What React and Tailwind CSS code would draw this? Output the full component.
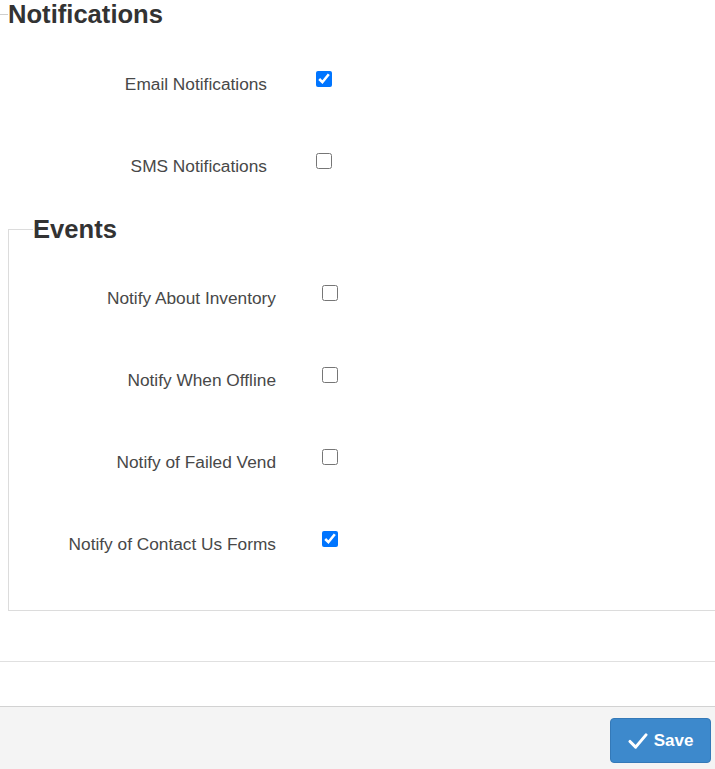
import React, { useState } from "react";

const outerItems = [
  { id: "email", label: "Email Notifications", checked: true },
  { id: "sms", label: "SMS Notifications", checked: false },
];

const eventItems = [
  { id: "inventory", label: "Notify About Inventory", checked: false },
  { id: "offline", label: "Notify When Offline", checked: false },
  { id: "failed", label: "Notify of Failed Vend", checked: false },
  { id: "contact", label: "Notify of Contact Us Forms", checked: true },
];

const CheckRow = ({ item, labelWidth, gap, onToggle }) => (
  <div className="flex items-start h-[82px]">
    <label
      htmlFor={item.id}
      className="text-right text-[17.3px] leading-5 text-[#484848] mt-[31px] shrink-0"
      style={{ width: labelWidth }}
    >
      {item.label}
    </label>
    <input
      id={item.id}
      type="checkbox"
      checked={item.checked}
      onChange={() => onToggle(item.id)}
      className="w-4 h-4 m-0 mt-[28px] accent-[#0075ff] shrink-0"
      style={{ marginLeft: gap }}
    />
  </div>
);

export default function App() {
  const [outer, setOuter] = useState(outerItems);
  const [events, setEvents] = useState(eventItems);

  const toggle = (setter) => (id) =>
    setter((list) => list.map((i) => (i.id === id ? { ...i, checked: !i.checked } : i)));

  return (
    <div className="w-full h-[769px] overflow-hidden bg-white font-['Liberation_Sans',Arial,sans-serif] flex flex-col">
      {/* Notifications */}
      <fieldset className="-ml-px mr-[-20px] border border-[#e0e0e0] border-t-[#cfcfcf] pl-2 pb-0 min-w-0">
        <legend className="w-full text-[25.6px] leading-[28px] font-bold text-[#333]">Notifications</legend>
        <div className="h-[15px]" />
        {outer.map((item) => (
          <CheckRow key={item.id} item={item} labelWidth={259} gap={49} onToggle={toggle(setOuter)} />
        ))}

        {/* Events */}
        <fieldset className="mt-2 mr-[-20px] border border-[#dcdcdc] pl-6 pb-[25px] min-w-0">
          <legend className="w-full text-[25.6px] leading-[28px] font-bold text-[#333]">Events</legend>
          <div className="h-[14px]" />
          {events.map((item) => (
            <CheckRow key={item.id} item={item} labelWidth={243} gap={46} onToggle={toggle(setEvents)} />
          ))}
        </fieldset>
        <div className="h-[50px]" />
      </fieldset>

      <div className="h-[44px]" />

      {/* Footer */}
      <div className="flex-1 border-t border-[#d2d2d2] bg-[#f4f4f4] flex justify-end items-start pt-[11px] pr-1">
        <button
          type="button"
          className="w-[101px] h-[45px] flex items-center justify-center gap-[6px] rounded-[4px] border border-[#3479b8] bg-[#3d89cc] text-white text-[17px] font-bold"
        >
          <svg width="20" height="16" viewBox="0 0 21 17" fill="none">
            <path d="M2 9 L8 15 L19 2" stroke="white" strokeWidth="3.2" strokeLinecap="round" strokeLinejoin="round" />
          </svg>
          Save
        </button>
      </div>
    </div>
  );
}
